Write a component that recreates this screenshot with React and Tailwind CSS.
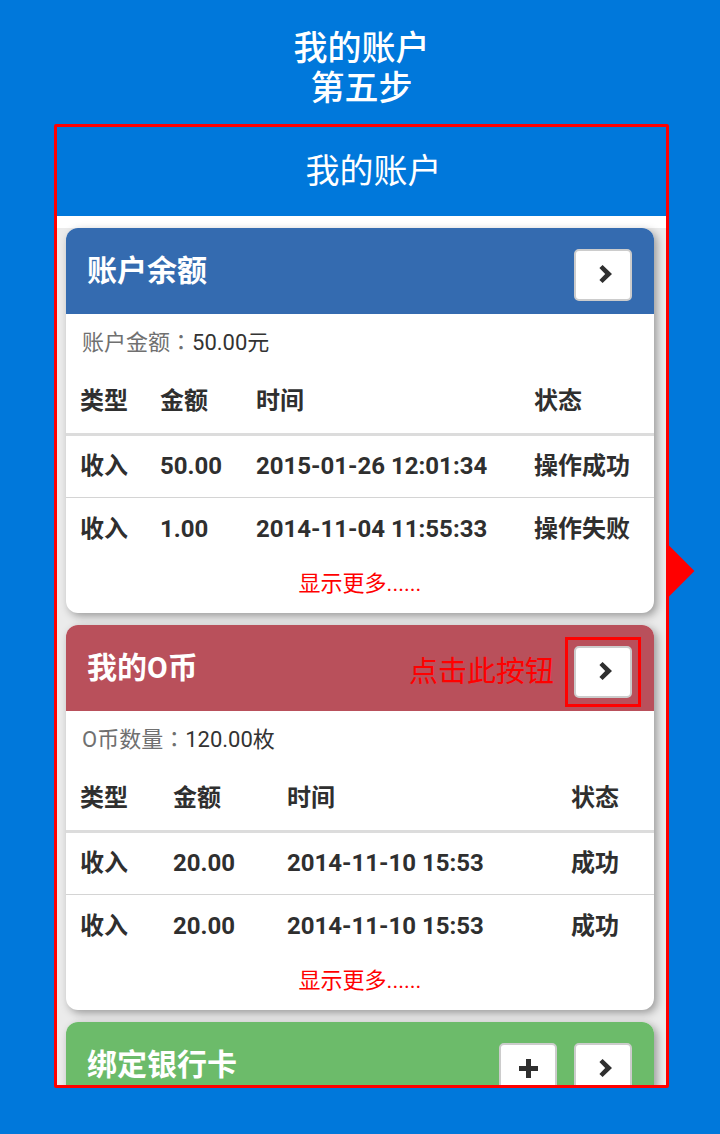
import React from "react";

const accounts = [
  {
    title: "账户余额",
    headerClass: "bg-[#346bb0]",
    label: "账户金额",
    value: "50.00元",
    columns: ["w-[94px]", "w-[96px]", "w-[278px]", ""],
    rows: [
      ["收入", "50.00", "2015-01-26 12:01:34", "操作成功"],
      ["收入", "1.00", "2014-11-04 11:55:33", "操作失败"],
    ],
  },
  {
    title: "我的O币",
    headerClass: "bg-[#b9505b]",
    label: "O币数量",
    value: "120.00枚",
    hint: "点击此按钮",
    columns: ["w-[107px]", "w-[114px]", "w-[284px]", ""],
    rows: [
      ["收入", "20.00", "2014-11-10 15:53", "成功"],
      ["收入", "20.00", "2014-11-10 15:53", "成功"],
    ],
  },
];

function ChevronIcon() {
  return (
    <svg className="ml-1" width="13" height="18" viewBox="0 0 13 18" fill="currentColor" aria-hidden="true">
      <path d="M3.6 0 13 9 3.6 18 0.4 15 6.2 9 0.4 3Z" />
    </svg>
  );
}

function PlusIcon() {
  return (
    <svg width="19" height="19" viewBox="0 0 19 19" fill="currentColor" aria-hidden="true">
      <path d="M7 0h5v7h7v5h-7v7H7v-7H0V7h7Z" />
    </svg>
  );
}

function IconButton({ label, children }) {
  return (
    <button
      type="button"
      aria-label={label}
      className="flex h-13 w-[58px] shrink-0 items-center justify-center rounded-[5px] border-2 border-[#ccc] bg-white pb-0.5 text-[#2f2f2f]"
    >
      {children}
    </button>
  );
}

function CardHeader({ title, className, children }) {
  return (
    <div className={`flex h-[86px] items-start rounded-t-xl pt-[21px] pr-[22px] pl-[21px] ${className}`}>
      <h2 className="flex-1 text-[30px] leading-[44px] font-bold text-white">{title}</h2>
      {children}
    </div>
  );
}

function Card({ children }) {
  return (
    <section className="shrink-0 rounded-xl bg-white shadow-[3px_3px_8px_rgba(0,0,0,0.35)]">
      {children}
    </section>
  );
}

function AccountCard({ account }) {
  return (
    <Card>
      <CardHeader title={account.title} className={account.headerClass}>
        {account.hint && (
          <span className="mr-5 text-[29px] leading-[52px] text-[#ff0000]">{account.hint}</span>
        )}
        <div className="relative">
          <IconButton label={`查看${account.title}`}>
            <ChevronIcon />
          </IconButton>
          {account.hint && (
            <div className="pointer-events-none absolute -inset-[9px] border-3 border-[#ff0000]" />
          )}
        </div>
      </CardHeader>
      <p className="px-4 pt-3 pb-[11px] text-[22px] leading-[33px] text-[#333]">
        <span className="text-[#707070]">
          {account.label}
          <span className="leading-none font-['Noto_Sans_CJK_TC',sans-serif]">：</span>
        </span>
        {account.value}
      </p>
      <table className="w-full table-fixed border-collapse text-left text-2xl text-[#2f2f2f]">
        <thead>
          <tr className="h-16 border-b-3 border-[#dcdcdc]">
            {["类型", "金额", "时间", "状态"].map((name, i) => (
              <th key={name} className={`p-0 font-bold whitespace-nowrap first:pl-[14px] ${account.columns[i]}`}>
                {name}
              </th>
            ))}
          </tr>
        </thead>
        <tbody>
          {account.rows.map((row, i) => (
            <tr key={i} className="h-[63px] border-b border-[#d4d4d4] last:border-b-0">
              {row.map((cell, j) => (
                <td key={j} className="p-0 font-bold whitespace-nowrap first:pl-[14px]">
                  {cell}
                </td>
              ))}
            </tr>
          ))}
        </tbody>
      </table>
      <div className="pb-[5px] text-center">
        <a href="#more" className="inline-block align-top text-[22px] leading-12 text-[#ff0000]">
          显示更多......
        </a>
      </div>
    </Card>
  );
}

export default function App() {
  return (
    <div className="flex h-screen flex-col bg-[#0078db] pt-7 pr-[51px] pb-[46px] pl-[54px] font-[Roboto,'Noto_Sans_CJK_SC',sans-serif]">
      <h1 className="mb-4 text-center text-[34px] leading-10 font-medium text-white">
        我的账户
        <br />
        第五步
      </h1>
      <div className="relative flex min-h-0 flex-1 flex-col">
        <div className="absolute top-[44.5%] right-0 size-9 translate-x-1/2 rotate-45 bg-[#ff0000]" />
        <main className="relative flex min-h-0 flex-1 flex-col overflow-hidden rounded-xs border-3 border-[#ff0000] bg-[#ebebeb]">
          <header className="shrink-0 border-b-12 border-white bg-[#0078db] py-5 pl-6 text-center text-[34px] leading-[49px] text-white">
            我的账户
          </header>
          <div className="flex flex-col gap-3 pr-3 pl-[9px]">
            {accounts.map((account) => (
              <AccountCard key={account.title} account={account} />
            ))}
            <Card>
              <CardHeader title="绑定银行卡" className="bg-[#6cbb6a]">
                <div className="flex gap-[17px]">
                  <IconButton label="添加银行卡">
                    <PlusIcon />
                  </IconButton>
                  <IconButton label="查看银行卡">
                    <ChevronIcon />
                  </IconButton>
                </div>
              </CardHeader>
            </Card>
          </div>
        </main>
      </div>
    </div>
  );
}
